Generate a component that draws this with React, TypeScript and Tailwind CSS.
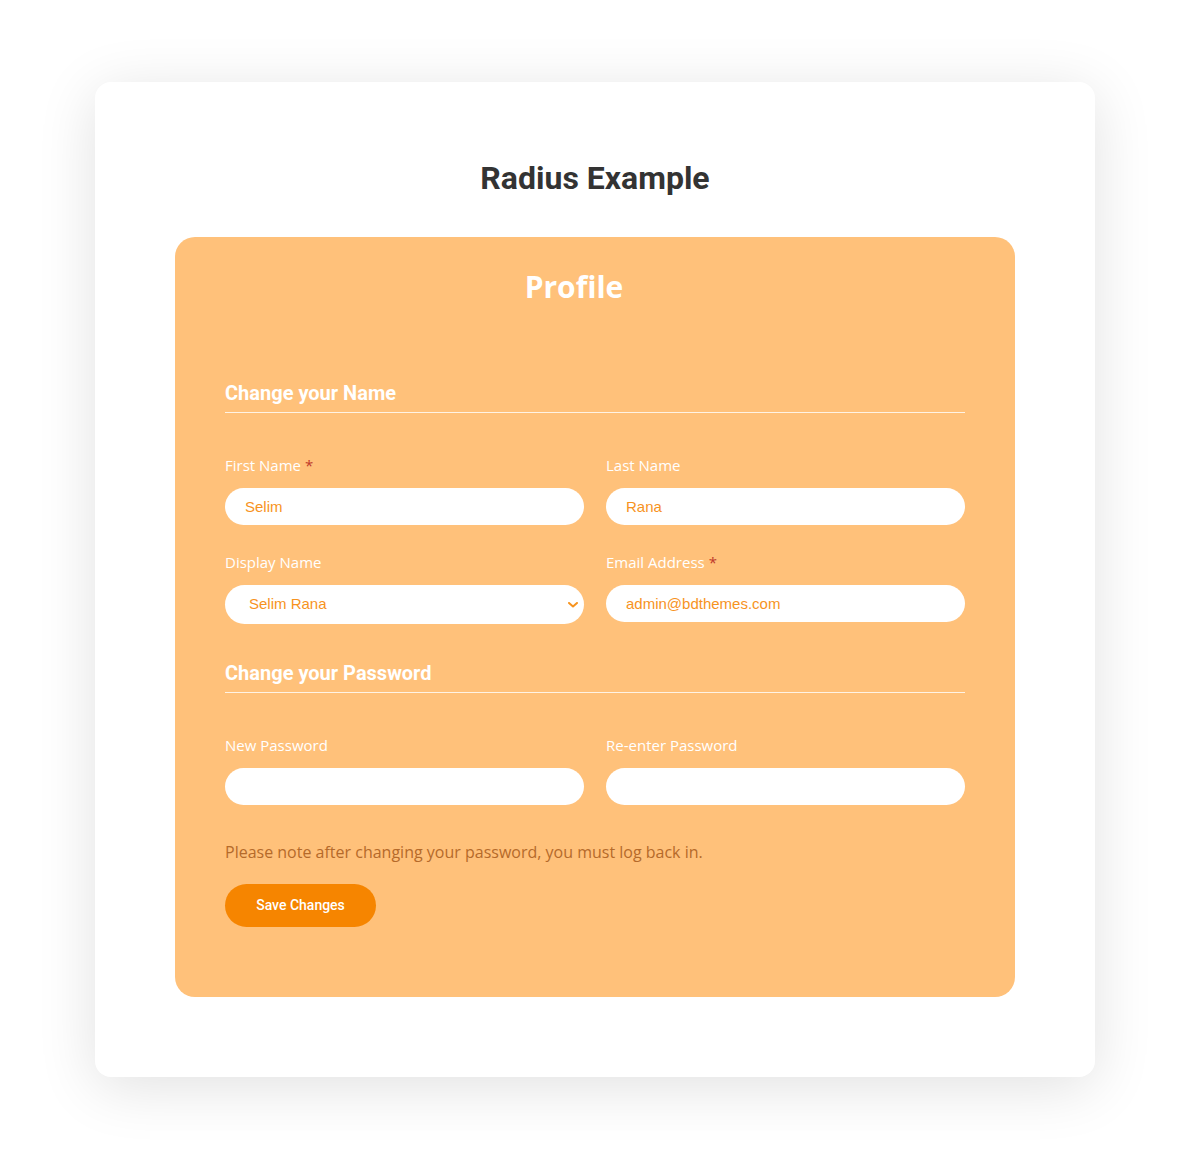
import React from 'react';

const labelCls = "block text-[15px] leading-[22px] text-white font-['Open_Sans',sans-serif]";
const inputCls = "w-full h-[37px] rounded-full bg-white pl-5 pr-4 text-[15px] text-[#f7931e] font-['Liberation_Sans',Arial,sans-serif] outline-none border-0";
const sectionCls = "text-[20px] leading-6 font-bold text-white font-['Roboto',sans-serif] pb-[7px] border-b border-white/80";

const Field: React.FC<{ label: string; required?: boolean; children: React.ReactNode }> = ({ label, required, children }) => (
    <div className="flex flex-col gap-3">
        <label className={labelCls}>
            {label}
            {required && <span className="text-[#c0392b] ml-1">*</span>}
        </label>
        {children}
    </div>
);

export default function App() {
    return (
        <div className="min-h-[1156px] bg-white px-[95px] pt-[82px] pb-[79px]">
            <div className="bg-white rounded-2xl shadow-[0_10px_60px_rgba(0,0,0,0.12)] pt-[76px] pb-[80px] px-[80px]">
                <h1 className="text-center text-[32px] leading-10 font-bold text-[#333] font-['Roboto',sans-serif]">
                    Radius Example
                </h1>

                {/* Profile form */}
                <div className="mt-[39px] bg-[#ffc17a] rounded-[20px] pt-[32px] px-[50px] pb-[70px]">
                    <h2 className="text-center text-[30px] leading-9 font-bold text-white font-['Open_Sans',sans-serif] pr-[42px]">
                        Profile
                    </h2>

                    <div className={`mt-[76px] ${sectionCls}`}>Change your Name</div>

                    <div className="mt-[41px] grid grid-cols-2 gap-x-[22px]">
                        <Field label="First Name" required>
                            <input className={inputCls} defaultValue="Selim" />
                        </Field>
                        <Field label="Last Name">
                            <input className={inputCls} defaultValue="Rana" />
                        </Field>
                    </div>

                    <div className="mt-[26px] grid grid-cols-2 gap-x-[22px] items-start">
                        <Field label="Display Name">
                            <div className="relative">
                                <select className="w-full h-[39px] appearance-none rounded-full bg-white pl-6 pr-8 text-[15px] text-[#f7931e] font-['Liberation_Sans',Arial,sans-serif] outline-none border-0">
                                    <option>Selim Rana</option>
                                    <option>Selim</option>
                                    <option>Rana</option>
                                </select>
                                <svg className="absolute right-[6px] top-[17px] pointer-events-none" width="10" height="6" viewBox="0 0 10 6" fill="none">
                                    <path d="M1 1l4 3.5L9 1" stroke="#f7931e" strokeWidth="2" strokeLinecap="round" strokeLinejoin="round" />
                                </svg>
                            </div>
                        </Field>
                        <Field label="Email Address" required>
                            <input className={inputCls} defaultValue="admin@bdthemes.com" />
                        </Field>
                    </div>

                    <div className={`mt-[37px] ${sectionCls}`}>Change your Password</div>

                    <div className="mt-[41px] grid grid-cols-2 gap-x-[22px]">
                        <Field label="New Password">
                            <input type="password" className={inputCls} />
                        </Field>
                        <Field label="Re-enter Password">
                            <input type="password" className={inputCls} />
                        </Field>
                    </div>

                    <p className="mt-[35px] text-[16px] leading-6 text-[#b56a2a] font-['Open_Sans',sans-serif]">
                        Please note after changing your password, you must log back in.
                    </p>

                    <button className="mt-5 w-[151px] h-[43px] rounded-full bg-[#f68500] text-white text-[14px] font-medium font-['Roboto',sans-serif]">
                        Save Changes
                    </button>
                </div>
            </div>
        </div>
    );
}
